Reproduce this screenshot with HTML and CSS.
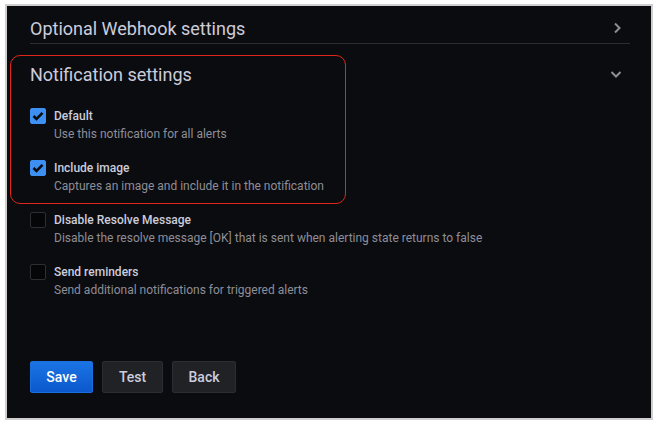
FILE: index.html
```html
<!DOCTYPE html>
<html>
<head>
<meta charset="utf-8">
<link rel="stylesheet" href="styles.css">
</head>
<body>
<div class="frame">
  <div class="section-head bordered">
    <span class="section-title">Optional Webhook settings</span>
    <svg class="chev" width="10" height="12" viewBox="0 0 10 12"><path d="M3 1.5 L7.5 6 L3 10.5" fill="none" stroke="#8e8e93" stroke-width="2"/></svg>
  </div>
  <div class="notif">
    <div class="highlight"></div>
    <div class="section-head">
      <span class="section-title">Notification settings</span>
      <svg class="chev" width="12" height="10" viewBox="0 0 12 10"><path d="M1.5 3 L6 7.5 L10.5 3" fill="none" stroke="#8e8e93" stroke-width="2"/></svg>
    </div>
    <div class="options">
      <div class="opt">
        <span class="box checked"><svg width="12" height="10" viewBox="0 0 12 10"><path d="M1.5 5 L4.5 8 L10.5 1.8" fill="none" stroke="#0b0c0e" stroke-width="2.6"/></svg></span>
        <div class="opt-text"><div class="label">Default</div><div class="desc">Use this notification for all alerts</div></div>
      </div>
      <div class="opt">
        <span class="box checked"><svg width="12" height="10" viewBox="0 0 12 10"><path d="M1.5 5 L4.5 8 L10.5 1.8" fill="none" stroke="#0b0c0e" stroke-width="2.6"/></svg></span>
        <div class="opt-text"><div class="label">Include image</div><div class="desc">Captures an image and include it in the notification</div></div>
      </div>
      <div class="opt">
        <span class="box"></span>
        <div class="opt-text"><div class="label">Disable Resolve Message</div><div class="desc">Disable the resolve message [OK] that is sent when alerting state returns to false</div></div>
      </div>
      <div class="opt">
        <span class="box"></span>
        <div class="opt-text"><div class="label">Send reminders</div><div class="desc">Send additional notifications for triggered alerts</div></div>
      </div>
    </div>
  </div>
  <div class="buttons">
    <button class="btn primary">Save</button>
    <button class="btn secondary">Test</button>
    <button class="btn secondary back">Back</button>
  </div>
</div>
</body>
</html>
```
FILE: styles.css
```css
html, body { margin: 0; padding: 0; background: #ffffff; }
body { font-family: Roboto, "Liberation Sans", sans-serif; }
.frame {
  margin: 4px 0 0 5px;
  border: 2px solid #cfcfcf;
  background: #0b0c0f;
  padding: 7px 21px 0 23px;
  box-sizing: content-box;
  width: 600px;
  height: 405px;
  position: relative;
}
.section-head {
  display: flex;
  align-items: center;
  justify-content: space-between;
  height: 30px;
}
.section-head.bordered { border-bottom: 1px solid #2b2d31; }
.section-title { font-size: 18px; color: #ccccdc; font-weight: 400; }
.chev { margin-right: 8px; }
.notif { position: relative; padding-top: 17px; }
.notif .section-head { height: 26px; }
.highlight {
  position: absolute;
  left: -20px;
  top: 11px;
  width: 336px;
  height: 149px;
  border: 1.5px solid #e0261a;
  border-radius: 10px;
  box-sizing: border-box;
  pointer-events: none;
}
.options { display: flex; flex-direction: column; gap: 16px; padding-top: 21px; }
.opt { display: flex; gap: 8px; align-items: flex-start; }
.box {
  width: 16px; height: 16px;
  box-sizing: border-box;
  border-radius: 2px;
  border: 1px solid #2c2f34;
  background: #050607;
  display: flex; align-items: center; justify-content: center;
  flex: none;
}
.box.checked { background: #3d8ff2; border-color: #3d8ff2; }
.opt-text { display: flex; flex-direction: column; }
.label { font-size: 12px; font-weight: 500; color: #ccccdc; line-height: 16px; }
.desc { font-size: 12px; color: #8e8e99; line-height: 20px; }
.buttons { display: flex; gap: 9px; margin-top: 61px; }
.btn {
  font-family: Roboto, "Liberation Sans", sans-serif;
  font-size: 14px;
  font-weight: 500;
  height: 32px;
  border-radius: 2px;
  padding: 0;
  cursor: pointer;
}
.primary {
  background: linear-gradient(#1b74e4, #0b58cc);
  border: 1px solid #1a6ee0;
  color: #ffffff;
  width: 63px;
}
.secondary {
  background: #202226;
  border: 1px solid #2a2d32;
  color: #ccccdc;
  width: 61px;
}
.secondary.back { width: 64px; }
```
